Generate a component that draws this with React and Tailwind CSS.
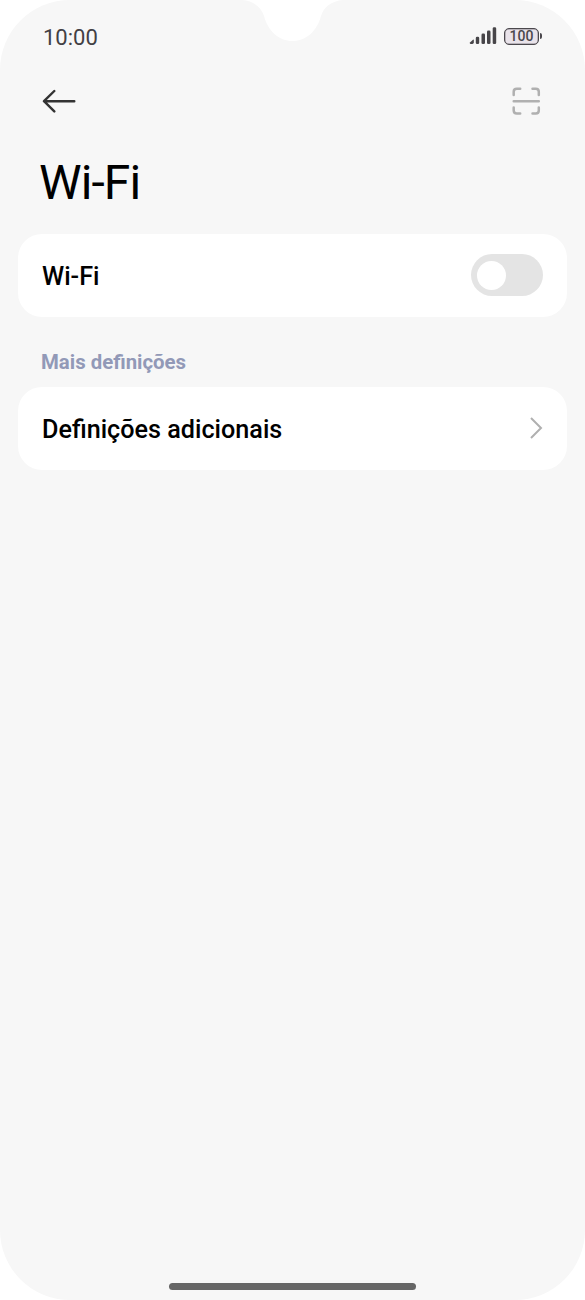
function Notch() {
  return (
    <svg
      className="absolute left-[242px] top-0"
      width="101"
      height="42"
      viewBox="0 0 101 42"
      fill="#fff"
      aria-hidden="true"
    >
      <path d="M0 0C12 1 19 7 22 16C26 31 37 41 50.500 41C64 41 75 31 79 16C82 7 89 1 101 0Z" />
    </svg>
  );
}

function SignalIcon() {
  return (
    <svg width="28" height="18" viewBox="0 0 28 18" fill="#474549">
      <path d="M1 15.500L4.200 12.500Q4.800 12.400 4.800 13.200V15.600Q4.700 17 3.400 17H1.600Q0.300 16.700 1 15.500Z" />
      <rect x="6.800" y="9.800" width="3.400" height="7.200" rx="1.300" />
      <rect x="12.500" y="6.600" width="3.500" height="10.400" rx="1.300" />
      <rect x="18" y="3.600" width="3.500" height="13.400" rx="1.300" />
      <rect x="23.700" y="0.300" width="3.500" height="16.700" rx="1.300" />
    </svg>
  );
}

function Battery() {
  return (
    <div className="flex items-center">
      <div className="flex h-[17px] w-[35px] items-center justify-center rounded-[5px] border-[1.5px] border-[#4b484d] bg-[#e9e3ea] pt-px text-[14px] leading-[15px] font-medium text-[#4b484d] ring-[0.5px] ring-[#4b484d]/60 ring-inset">
        100
      </div>
      <div className="ml-px h-[6px] w-[2px] rounded-r-sm bg-[#4b484d]" />
    </div>
  );
}

function StatusBar() {
  return (
    <div className="flex h-[74px] items-center justify-between pr-[43px] pl-[43px] text-[#424044]">
      <span className="pt-[2px] text-[22px] leading-none">10:00</span>
      <div className="flex items-center gap-[7px] pb-[2px]">
        <SignalIcon />
        <Battery />
      </div>
    </div>
  );
}

function Header() {
  return (
    <div className="flex h-[54px] items-center justify-between pr-[44px] pl-[42px]">
      <button aria-label="Voltar">
        <svg width="34" height="24" viewBox="0 0 34 24" fill="none" stroke="#333" strokeWidth="2.400" strokeLinecap="round" strokeLinejoin="round">
          <path d="M12.300 2L2 12.200L12.300 22.400M2 12.200H32.300" />
        </svg>
      </button>
      <button aria-label="Ler código">
        <svg width="29" height="29" viewBox="0 0 29 29" fill="none" stroke="#b0b0b0" strokeWidth="2.500" strokeLinecap="round" strokeLinejoin="round">
          <path d="M1.700 8V4.700Q1.700 1.700 4.700 1.700H8.200M20.500 1.700H23.800Q26.800 1.700 26.800 4.700V8M26.800 20.500V23.500Q26.800 26.500 23.800 26.500H20.500M8.200 26.500H4.700Q1.700 26.500 1.700 23.500V20.500M1.700 14.200H26.800" />
        </svg>
      </button>
    </div>
  );
}

function Row({ label, children }) {
  return (
    <div className="mx-[18px] flex h-[83px] items-center justify-between rounded-[24px] bg-white pr-[24px] pl-[24px]">
      <span className="pt-[2px] text-[25.2px] leading-[30px] font-medium text-black">{label}</span>
      {children}
    </div>
  );
}

export default function App() {
  return (
    <div className="h-[1300px] w-[585px] bg-white font-['Roboto',sans-serif]">
      <div className="relative flex h-full flex-col overflow-hidden rounded-[70px] bg-[#f7f7f7]">
        <Notch />
        <StatusBar />
        <Header />
        <h1 className="flex h-[106px] items-center pt-[4px] pl-[39px] text-[48px] leading-[56px] font-normal tracking-[-0.9px] text-black">
          Wi-Fi
        </h1>

        <Row label="Wi-Fi">
          <button role="switch" aria-checked="false" aria-label="Wi-Fi" className="mb-px flex h-[42px] w-[72px] items-center rounded-full bg-[#e4e4e4] pl-[6px]">
            <span className="size-[29px] rounded-full bg-white" />
          </button>
        </Row>

        <h2 className="flex h-[70px] items-center pt-[19px] pl-[41px] text-[20.4px] leading-6 font-bold text-[#9299b7]">
          Mais definições
        </h2>

        <Row label="Definições adicionais">
          <svg className="mb-[2px]" width="14" height="24" viewBox="0 0 14 24" fill="none" stroke="#b0b0b0" strokeWidth="2">
            <path d="M2 2L12 12L2 22" />
          </svg>
        </Row>

        <div className="mx-auto mt-auto mb-[10px] h-[7px] w-[247px] rounded-full bg-[#666]" />
      </div>
    </div>
  );
}
